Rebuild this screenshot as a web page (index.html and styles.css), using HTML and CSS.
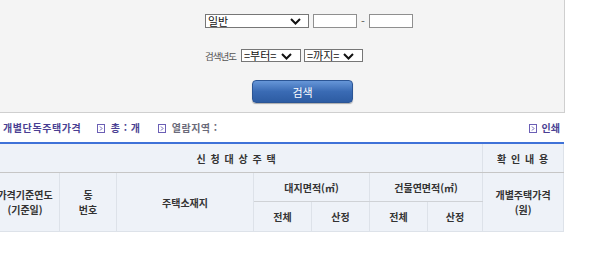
FILE: index.html
```html
<!DOCTYPE html>
<html lang="ko">
<head>
  <meta charset="UTF-8">
  <title>개별단독주택가격 열람</title>
  <meta name="viewport" content="width=device-width, initial-scale=1.0">

  <link rel="stylesheet" href="styles.css">
</head>
<body>

  <div class="wrap">

    <!-- 검색 조건 -->
    <div class="search-box">
      <div class="search-row">
        <span class="sel sel-wide">
          <select><option>일반</option></select>
          <svg class="chev" width="11" height="7" viewBox="0 0 11 7"><path d="M1 1 L5.5 5.5 L10 1" fill="none" stroke="#111" stroke-width="2"/></svg>
        </span>
        <input type="text" class="num-input">
        <span class="dash">-</span>
        <input type="text" class="num-input num-input-to">
      </div>

      <div class="search-row year-row">
        <label class="year-label">검색년도</label>
        <span class="sel sel-year">
          <select><option>=부터=</option></select>
          <svg class="chev" width="11" height="7" viewBox="0 0 11 7"><path d="M1 1 L5.5 5.5 L10 1" fill="none" stroke="#111" stroke-width="2"/></svg>
        </span>
        <span class="sel sel-year sel-year2">
          <select><option>=까지=</option></select>
          <svg class="chev" width="11" height="7" viewBox="0 0 11 7"><path d="M1 1 L5.5 5.5 L10 1" fill="none" stroke="#111" stroke-width="2"/></svg>
        </span>
      </div>

      <button class="search-btn">검색</button>
    </div>

    <!-- 결과 요약 -->
    <div class="result-bar">
      <strong class="result-title">개별단독주택가격</strong>
      <span class="info">
        <svg class="bullet" width="8" height="9" viewBox="0 0 8 9"><rect x="0.5" y="0.5" width="7" height="8" fill="#fff" stroke="#6b5fb5"/><path d="M3 2.5 L5 4.5 L3 6.5" fill="none" stroke="#6b5fb5"/></svg>
        총 : 개
      </span>
      <span class="info info-area">
        <svg class="bullet" width="8" height="9" viewBox="0 0 8 9"><rect x="0.5" y="0.5" width="7" height="8" fill="#fff" stroke="#6b5fb5"/><path d="M3 2.5 L5 4.5 L3 6.5" fill="none" stroke="#6b5fb5"/></svg>
        열람지역 :
      </span>
      <a class="print" href="#">
        <svg class="bullet" width="8" height="9" viewBox="0 0 8 9"><rect x="0.5" y="0.5" width="7" height="8" fill="#fff" stroke="#6b5fb5"/><path d="M3 2.5 L5 4.5 L3 6.5" fill="none" stroke="#6b5fb5"/></svg>
        인쇄
      </a>
    </div>

    <!-- 결과 표 -->
    <table class="price-table">
      <colgroup>
        <col class="c-year">
        <col class="c-dong">
        <col class="c-addr">
        <col class="c-area">
        <col class="c-area">
        <col class="c-area">
        <col class="c-area2">
        <col class="c-price">
      </colgroup>
      <thead>
        <tr class="r1">
          <th colspan="7">신 청 대 상 주 택</th>
          <th>확 인 내 용</th>
        </tr>
        <tr class="r2">
          <th rowspan="2">가격기준연도<br>(기준일)</th>
          <th rowspan="2">동<br>번호</th>
          <th rowspan="2">주택소재지</th>
          <th colspan="2">대지면적(㎡)</th>
          <th colspan="2">건물연면적(㎡)</th>
          <th rowspan="2">개별주택가격<br>(원)</th>
        </tr>
        <tr class="r3">
          <th>전체</th>
          <th>산정</th>
          <th>전체</th>
          <th>산정</th>
        </tr>
      </thead>
    </table>

  </div>

</body>
</html>
```

FILE: styles.css
```css
body {
  margin: 0;
  font-family: "Noto Sans CJK KR", "Noto Sans", sans-serif;
  font-size: 11px;
  color: #333;
  background-color: #ffffff;
}

.wrap {
  width: 565px;
}

/* Search box */
.search-box {
  box-sizing: border-box;
  height: 113px;
  padding: 14px 0 0 205px;
  background-color: #f4f4f4;
  border-right: 1px solid #cfcfcf;
  border-bottom: 1px solid #cfcfcf;
}

.search-row {
  display: flex;
  align-items: center;
  height: 14px;
}

.year-row {
  height: 13px;
  margin-top: 21px;
}

.sel {
  position: relative;
  display: inline-block;
  box-sizing: border-box;
  height: 100%;
  background-color: #ffffff;
  border: 1px solid #767676;
}

.sel select {
  appearance: none;
  -webkit-appearance: none;
  display: block;
  width: 100%;
  height: 100%;
  margin: 0;
  padding: 0 0 0 2px;
  border: none;
  background: transparent;
  font-family: inherit;
  font-size: 11px;
  line-height: 11px;
  color: #111;
}

.sel .chev {
  position: absolute;
  top: 50%;
  margin-top: -3px;
  right: 7px;
  pointer-events: none;
}

.sel-wide {
  width: 104px;
}

.sel-year {
  width: 60px;
  margin-left: 4px;
}

.sel-year2 {
  width: 59px;
  margin-left: 3px;
}

.sel-year .chev {
  right: 8px;
}

.num-input {
  box-sizing: border-box;
  width: 44px;
  height: 14px;
  margin: 0 0 0 4px;
  padding: 0;
  border: 1px solid #8f8f8f;
  background-color: #ffffff;
}

.num-input-to {
  margin-left: 0;
}

.dash {
  width: 12px;
  text-align: center;
  color: #555;
  font-size: 11px;
}

.year-label {
  width: 32px;
  font-size: 9.5px;
  letter-spacing: -1px;
  color: #555;
  white-space: nowrap;
}

.search-btn {
  display: block;
  width: 101px;
  height: 23px;
  margin: 18px 0 0 47px;
  padding: 0;
  border: 1px solid #2b5595;
  border-radius: 4px;
  background: linear-gradient(#6696d8, #3a6bb4 50%, #2d5ca3);
  box-shadow: 0 1px 1px rgba(0, 0, 0, 0.3);
  color: white;
  font-family: inherit;
  font-size: 11px;
  cursor: pointer;
}

/* Result summary */
.result-bar {
  display: flex;
  align-items: center;
  height: 29px;
  padding: 0 5px 0 3px;
}

.result-title {
  font-size: 10px;
  letter-spacing: 0.6px;
  color: #4a3f93;
}

.bullet {
  margin-right: 2px;
  vertical-align: -1px;
}

.info {
  margin-left: 16px;
  font-size: 10px;
  font-weight: bold;
  letter-spacing: 0.5px;
  color: #4a3f93;
}

.info-area {
  margin-left: 18px;
  color: #6a6a7a;
}

.print {
  margin-left: auto;
  font-size: 10px;
  font-weight: bold;
  color: #4a3f93;
  text-decoration: none;
}

/* Result table */
.price-table {
  width: 573px;
  margin-left: -10px;
  table-layout: fixed;
  border-collapse: collapse;
  border-top: 2px solid #3f72d8;
  border-bottom: 1px solid #c2c2c2;
}

.c-year { width: 69px; }
.c-dong { width: 57px; }
.c-addr { width: 137px; }
.c-area { width: 58px; }
.c-area2 { width: 55px; }
.c-price { width: 81px; }

.price-table th {
  padding: 0;
  background-color: #eef2f8;
  border: 1px solid #dde2e9;
  font-size: 10px;
  line-height: 15px;
  color: #333;
  text-align: center;
}

.r1 th {
  height: 28px;
  border-bottom: 1px solid #c6c6c6;
  letter-spacing: 1px;
}

.r2 th {
  height: 28px;
}

.r2 th[colspan] {
  border-bottom: 1px solid #cfd2d6;
}

.r3 th {
  height: 29px;
}
```
